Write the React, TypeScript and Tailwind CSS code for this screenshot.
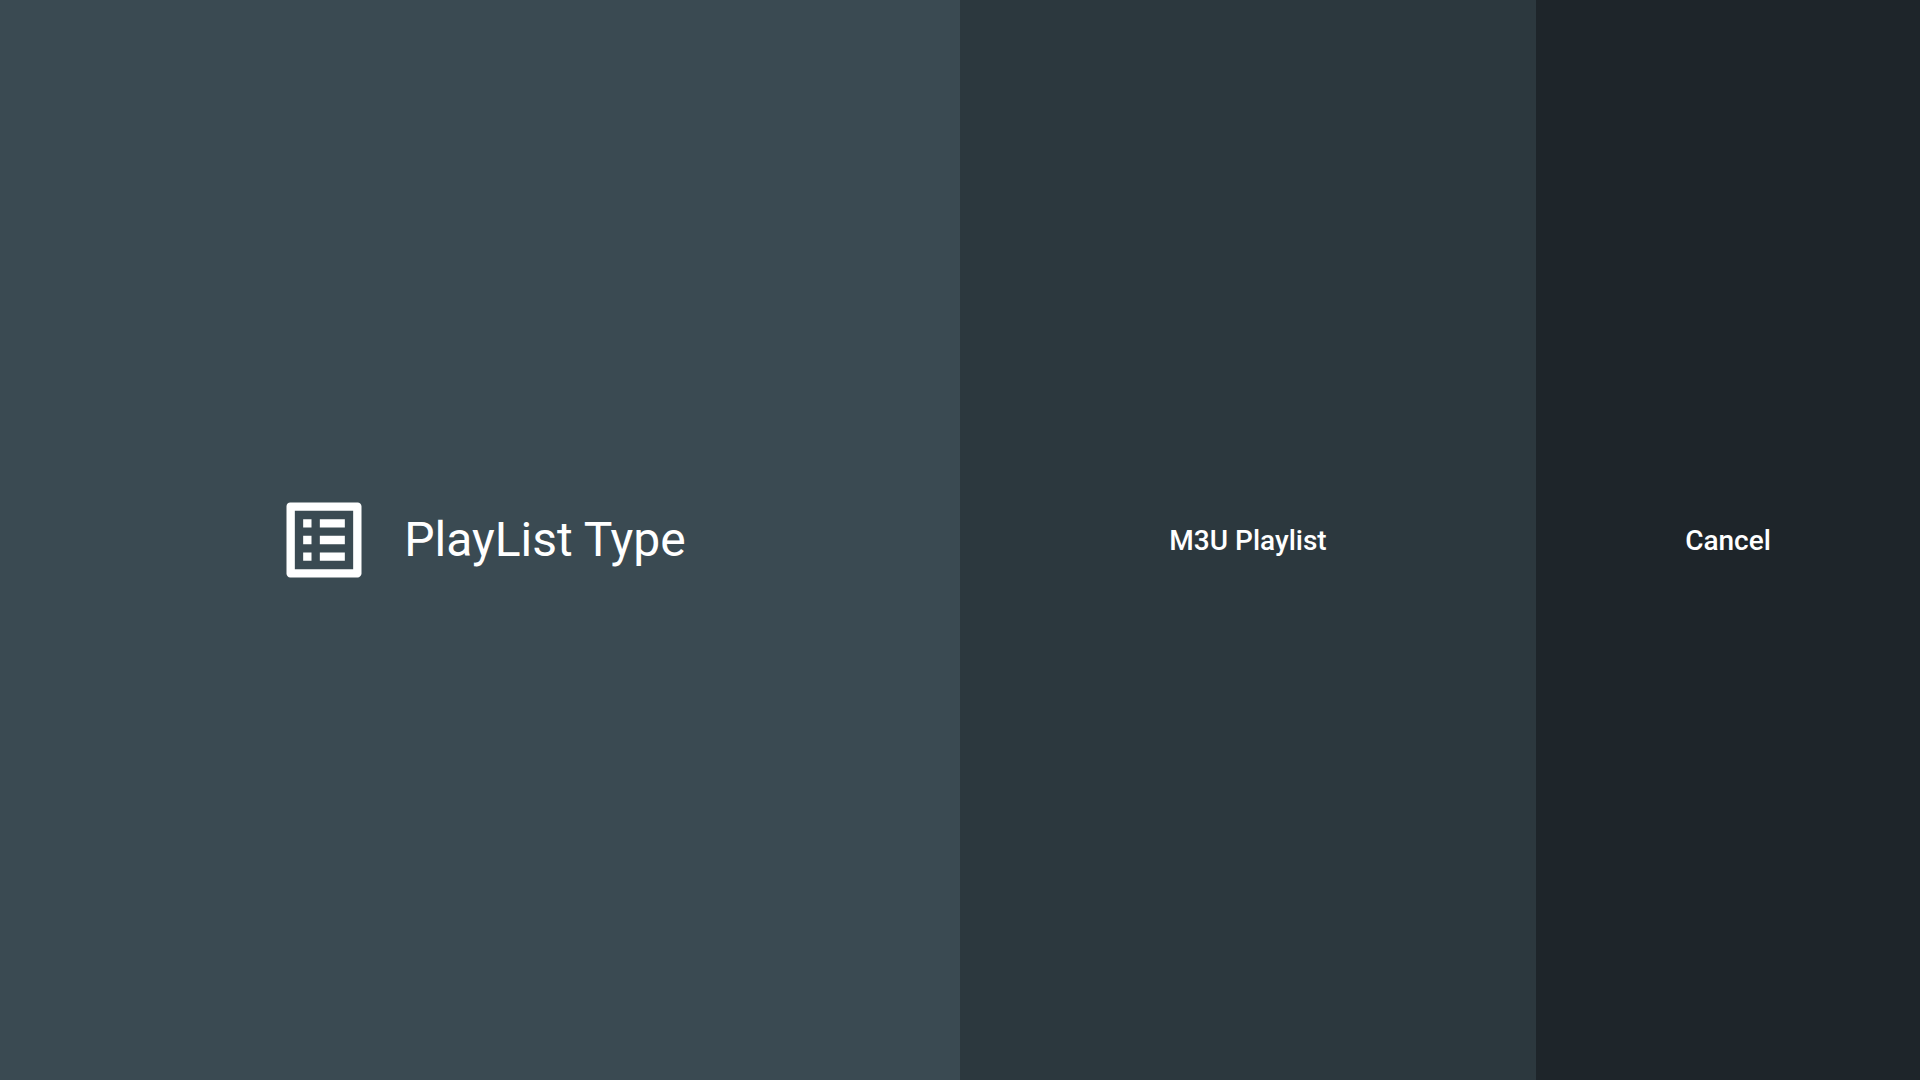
export default function App() {
  return (
    <main className="flex h-screen w-full font-['Roboto',sans-serif] text-white">
      <header className="flex w-1/2 items-center justify-center gap-[30px] bg-[#3a4a52]">
        <svg className="size-25 shrink-0" viewBox="0 0 24 24" fill="currentColor" aria-hidden="true">
          <path d="M19 5v14H5V5h14m1.1-2H3.9c-.5 0-.9.4-.9.9v16.2c0 .4.4.9.9.9h16.2c.4 0 .9-.5.9-.9V3.9c0-.5-.5-.9-.9-.9zM11 7h6v2h-6V7zm0 4h6v2h-6v-2zm0 4h6v2h-6zM7 7h2v2H7zm0 4h2v2H7zm0 4h2v2H7z" />
        </svg>
        <h1 className="text-5xl font-normal whitespace-nowrap">PlayList Type</h1>
      </header>
      <button type="button" className="w-3/10 bg-[#2c383e] pt-0.5 text-[28px] font-medium">
        M3U Playlist
      </button>
      <button type="button" className="w-1/5 bg-[#1e252a] pt-0.5 text-[28px] font-medium">
        Cancel
      </button>
    </main>
  );
}
